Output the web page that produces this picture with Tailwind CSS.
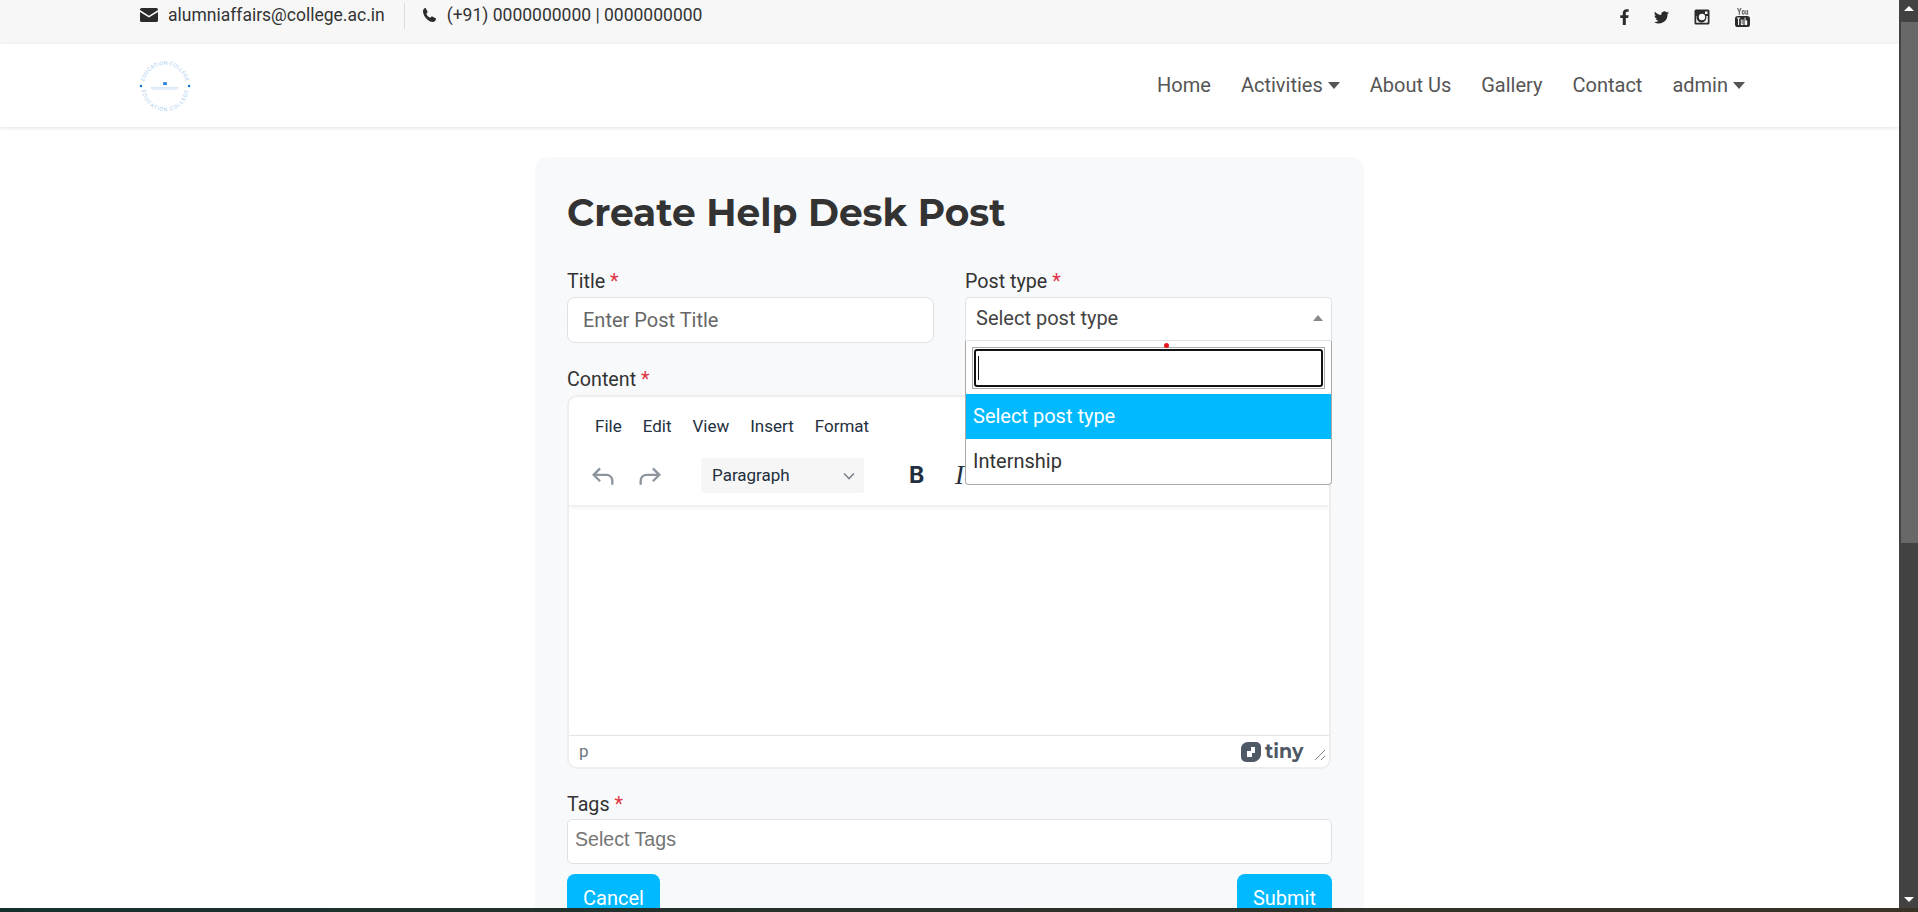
<!DOCTYPE html>
<html>
<head>
<meta charset="utf-8">
<title>Create Help Desk Post</title>
<script src="https://cdn.jsdelivr.net/npm/@tailwindcss/browser@4"></script>
</head>
<body class="m-0 h-[912px] w-[1918px] overflow-hidden bg-white font-['Roboto',sans-serif] text-[#333]">
<div class="flex h-[908px] w-full">
  <div class="flex h-full w-[1899px] flex-col overflow-hidden">
    <div class="flex h-[44px] shrink-0 justify-between bg-[#f7f7f7] pl-[140px] pr-[149px]">
      <div class="flex items-start pt-[3px] text-[17.5px] leading-[24px] text-[#333]">
        <svg class="mr-[10px] mt-[5px] h-[14px] w-[18px]" viewBox="0 0 17 14" preserveAspectRatio="none"><path fill="#2b2b2b" d="M1.5 0h14A1.5 1.5 0 0 1 17 1.5v.6L8.5 7.8 0 2.100v-.6A1.500 1.500 0 0 1 1.500 0zM0 3.900l8.500 5.700L17 3.900v8.600a1.500 1.500 0 0 1-1.500 1.500h-14A1.500 1.500 0 0 1 0 12.500z"/></svg>
        <span>alumniaffairs@college.ac.in</span>
        <div class="ml-[19px] mr-[18px] h-[26px] w-px bg-[#ddd]"></div>
        <svg class="mr-[11px] mt-[5px] h-[14px] w-[13px]" viewBox="0 0 13 14"><path fill="#2b2b2b" d="M2.800.300 4.500 3.700c.2.400.1.800-.2 1.100l-1 1c.7 1.800 2 3.200 3.900 4l1-1c.3-.3.700-.4 1.100-.2l3.400 1.700c.3.200.4.500.3.800-.4 1.700-1.500 2.900-3 2.900C4.900 14 0 8.200 0 3.100 0 1.600.900.700 2 .100c.3-.2.600 0 .8.200z"/></svg>
        <span>(+91) 0000000000 | 0000000000</span>
      </div>
      <div class="flex items-start gap-[25px] pt-[9px]">
        <svg class="h-[16px] w-[9px]" viewBox="0 0 9 16"><path fill="#2b2b2b" d="M2.800 16V9H.3V6.200h2.500V4C2.800 1.500 4.300.2 6.500.2c1 0 1.900.1 2.200.1v2.500H7.200C6 2.800 5.800 3.400 5.800 4.200v2h2.800L8.200 9H5.800v7z"/></svg>
        <svg class="mt-[2px] h-[13px] w-[15px]" viewBox="0 0 16 14" preserveAspectRatio="none"><path fill="#2b2b2b" d="M16 1.900c-.6.300-1.200.4-1.900.5.700-.4 1.200-1 1.400-1.800-.6.400-1.300.6-2.100.8A3.300 3.300 0 0 0 7.800 4.400C5.100 4.300 2.700 3 1.100.9c-.9 1.500-.4 3.400 1 4.400-.5 0-1-.2-1.500-.4 0 1.600 1.100 2.900 2.600 3.200-.5.100-1 .2-1.500.1.400 1.300 1.600 2.200 3.100 2.300A6.600 6.600 0 0 1 0 11.800 9.300 9.300 0 0 0 14.400 3.500c.6-.4 1.200-1 1.600-1.600z"/></svg>
        <svg class="h-[16px] w-[16px]" viewBox="0 0 16 16"><path fill="#2b2b2b" fill-rule="evenodd" d="M2 .5h12A1.500 1.500 0 0 1 15.500 2v12a1.500 1.500 0 0 1-1.500 1.500H2A1.500 1.500 0 0 1 .5 14V2A1.500 1.500 0 0 1 2 .5zM11 2.500v2.500h2.500V2.500zM2.200 7v6.300c0 .3.200.5.500.5h10.600c.3 0 .5-.2.500-.5V7h-1.500a5 5 0 1 1-9.600 0zM8 4.800a3.200 3.200 0 1 0 0 6.400 3.200 3.200 0 0 0 0-6.400z"/></svg>
        <svg class="-mt-px h-[19px] w-[15px]" viewBox="0 0 16 20" preserveAspectRatio="none"><path fill="#666" d="M2 0h1.500l1 3 1-3H7L5.300 4.200V7H4V4.200zM8.800 2c1 0 1.600.6 1.600 1.500v2C10.400 6.400 9.800 7 8.800 7S7.200 6.400 7.200 5.500v-2C7.200 2.600 7.800 2 8.800 2zm0 1c-.3 0-.4.200-.4.500v2c0 .3.100.5.400.5s.4-.2.400-.5v-2c0-.3-.1-.5-.4-.5zM11 2h1.100v3.600c0 .3.100.4.300.4s.4-.2.500-.4V2H14v5h-1.100v-.5c-.3.400-.7.600-1.100.6-.5 0-.8-.4-.8-1z"/><path fill="#2b2b2b" fill-rule="evenodd" d="M3 8.500h10a3 3 0 0 1 3 3V17a3 3 0 0 1-3 3H3a3 3 0 0 1-3-3v-5.500a3 3 0 0 1 3-3zM2 10v1h1.200v7h1.200v-7h1.200v-1zm4.200 2v5c0 .6.300 1 .8 1 .4 0 .7-.2 1-.5v.5h1v-6h-1v4.600c-.2.200-.4.300-.5.300-.2 0-.3-.1-.3-.3V12zm4 -2v8h1v-.4c.3.300.5.500.9.500.5 0 .9-.4.900-1.100v-3c0-.800-.4-1.100-.9-1.100-.3 0-.6.200-.9.500V10z"/></svg>
      </div>
    </div>
    <nav class="relative z-10 flex h-[83px] shrink-0 items-center justify-between bg-white pl-[139px] pr-[154px] shadow-[0_1px_4px_rgba(0,0,0,0.12)]">
      <svg class="h-[52px] w-[52px]" viewBox="0 0 54 54">
        <defs>
          <path id="top-arc" d="M5 27 A22 22 0 0 1 49 27"/>
          <path id="bot-arc" d="M7 29 A20 20 0 0 0 47 29"/>
        </defs>
        <text font-family="Roboto" font-size="5.500" fill="#a9cdef" letter-spacing=".3"><textPath href="#top-arc" startOffset="50%" text-anchor="middle">EDUCATION COLLEGE</textPath></text>
        <text font-family="Roboto" font-size="5.500" fill="#a9cdef" letter-spacing=".3" dominant-baseline="hanging"><textPath href="#bot-arc" startOffset="50%" text-anchor="middle">EDUCATION COLLEGE</textPath></text>
        <circle cx="2" cy="27" r="1.300" fill="#0a74da"/><circle cx="52" cy="27" r="1.300" fill="#0a74da"/>
        <rect x="25" y="23" width="4" height="3" fill="#2a86df"/>
        <rect x="12" y="28.500" width="29" height="1" fill="#bcd6f0"/><rect x="14" y="30.500" width="25" height=".7" fill="#d3e4f5"/>
      </svg>
      <div class="flex items-center gap-[30px] text-[20px] leading-[27px] text-[#555]">
        <span>Home</span>
        <span class="flex items-center">Activities<span class="ml-[5px] h-0 w-0 border-x-[6px] border-t-[7px] border-x-transparent border-t-[#555]"></span></span>
        <span>About Us</span>
        <span>Gallery</span>
        <span>Contact</span>
        <span class="flex items-center">admin<span class="ml-[5px] h-0 w-0 border-x-[6px] border-t-[7px] border-x-transparent border-t-[#555]"></span></span>
      </div>
    </nav>
    <main class="flex justify-center pt-[30px]">
      <div class="h-[900px] w-[829px] shrink-0 rounded-[12px] bg-[#f8f9fa] px-[32px] pt-[33px]">
        <h1 class="m-0 font-['Montserrat','Open_Sans',sans-serif] text-[37.5px] font-bold leading-[45px] text-[#333]">Create Help Desk Post</h1>
        <div class="mt-[33px] grid grid-cols-[367px_367px] gap-x-[31px]">
          <div>
            <label class="block text-[19.7px] leading-[27px] text-[#333]">Title <span class="text-[#dc3545]">*</span></label>
            <div class="mt-[2px] flex h-[46px] items-center rounded-[8px] border border-[#dee2e6] bg-white pl-[15px] text-[20px] text-[#666]">Enter Post Title</div>
          </div>
          <div class="relative">
            <label class="block text-[19.7px] leading-[27px] text-[#333]">Post type <span class="text-[#dc3545]">*</span></label>
            <div class="mt-[2px] flex h-[44px] items-center justify-between rounded-t-[4px] border border-[#dee2e6] bg-white pl-[10px] pr-[8px] text-[20px] text-[#444]">
              <span class="-mt-[2px]">Select post type</span>
              <span class="mb-[3px] h-0 w-0 border-x-[5px] border-b-[6px] border-x-transparent border-b-[#888]"></span>
            </div>
            <div class="absolute left-0 top-[73px] z-20 w-[367px] rounded-b-[4px] border border-t-0 border-[#aaa] bg-white text-[20px]">
              <div class="relative h-[53px] px-[6px] pt-[6px]">
                <span class="absolute left-[198px] top-[2px] h-[5px] w-[5px] rounded-full bg-[#e8141c]"></span>
                <div class="h-[42px] border border-[#aaa] p-px">
                  <div class="flex h-full items-center rounded-[3px] border-2 border-[#111] bg-white pl-[2px]"><span class="h-[24px] w-px bg-[#111]"></span></div>
                </div>
              </div>
              <div class="flex h-[45px] items-center bg-[#00b9ff] pb-[2px] pl-[7px] text-white">Select post type</div>
              <div class="flex h-[45px] items-center pb-[2px] pl-[7px] text-[#333]">Internship</div>
            </div>
          </div>
        </div>
        <label class="mt-[23px] block text-[19.7px] leading-[27px] text-[#333]">Content <span class="text-[#dc3545]">*</span></label>
        <div class="mt-[2px] flex h-[374px] w-[764px] flex-col overflow-hidden rounded-[10px] border-2 border-[#eeeeee] bg-white">
          <div class="relative z-10 h-[108px] shrink-0 shadow-[0_2px_4px_rgba(34,47,62,0.1)]">
            <div class="flex gap-[21px] pl-[26px] pt-[17px] text-[17px] leading-[24px] text-[#222f3e]">
              <span>File</span><span>Edit</span><span>View</span><span>Insert</span><span>Format</span>
            </div>
            <div class="mt-[20px] flex h-[35px] items-center pl-[20px]">
              <svg class="h-[28px] w-[28px]" viewBox="0 0 24 24"><path fill="none" stroke="#8d959e" stroke-width="2" d="M9.500 5.500 4 11l5.500 5.500M4 11h11a5 5 0 0 1 5 5v3.500"/></svg>
              <svg class="ml-[19px] h-[28px] w-[28px]" viewBox="0 0 24 24"><path fill="none" stroke="#8d959e" stroke-width="2" d="M14.500 5.500 20 11l-5.500 5.500M20 11H9a5 5 0 0 0-5 5v3.500"/></svg>
              <div class="ml-[37px] flex h-[35px] w-[163px] items-center justify-between rounded-[3px] bg-[#f6f6f6] pl-[11px] pr-[9px] text-[17px] text-[#222f3e]">
                <span>Paragraph</span>
                <svg class="h-[12px] w-[12px]" viewBox="0 0 12 12"><path fill="none" stroke="#7d858e" stroke-width="1.600" d="M1 3.500l5 5 5-5"/></svg>
              </div>
              <span class="ml-[45px] w-[15px] font-['Inter',sans-serif] text-[23px] font-bold text-[#222f3e]">B</span>
              <span class="ml-[31px] font-['Liberation_Serif',serif] text-[27px] italic text-[#222f3e]">I</span>
            </div>
          </div>
          <div class="flex-1"></div>
          <div class="flex h-[32px] shrink-0 items-center justify-between border-t border-[#e4e4e4] pl-[10px] pr-[3px] text-[17px] text-[#6b7580]">
            <span>p</span>
            <div class="flex items-center">
              <svg class="mr-[4px] h-[20px] w-[20px]" viewBox="0 0 20 20"><path fill="#4f5966" fill-rule="evenodd" d="M7 0h8a5 5 0 0 1 5 5v7c0 4-3 7-7 8H5a5 5 0 0 1-5-5V7c0-4 3-7 7-7zM10 5v4H6v6h5v-4h3V5z"/></svg>
              <span class="w-[36px] font-['Montserrat','Inter',sans-serif] text-[19px] font-bold leading-none text-[#4f5966]">tiny</span>
              <svg class="ml-[13px] mt-[6px] h-[12px] w-[12px]" viewBox="0 0 12 12"><path stroke="#7d858e" stroke-width="1" d="M1 11 11 1M7 11l4-4"/></svg>
            </div>
          </div>
        </div>
        <label class="mt-[22px] block text-[19.7px] leading-[27px] text-[#333]">Tags <span class="text-[#dc3545]">*</span></label>
        <div class="mt-px flex h-[45px] w-[765px] items-start rounded-[5px] border border-[#dee2e6] bg-white pl-[7px] pt-[5px] font-['Liberation_Sans',sans-serif] text-[19.6px] text-[#757575]">Select Tags</div>
        <div class="mt-[10px] flex w-[765px] justify-between">
          <button class="h-[48px] w-[93px] rounded-[8px] bg-[#00b9ff] text-[20px] text-white">Cancel</button>
          <button class="h-[48px] w-[95px] rounded-[8px] bg-[#00b9ff] text-[20px] text-white">Submit</button>
        </div>
      </div>
    </main>
  </div>
  <div class="relative h-full w-[19px] shrink-0 bg-[#424242]">
    <div class="flex h-[17px] items-center justify-center"><span class="h-0 w-0 border-x-[5px] border-b-[5px] border-x-transparent border-b-white"></span></div>
    <div class="ml-[2px] mt-[5px] h-[521px] w-[17px] bg-[#686868]"></div>
    <div class="absolute bottom-0 flex h-[17px] w-full items-center justify-center"><span class="h-0 w-0 border-x-[5px] border-t-[5px] border-x-transparent border-t-white"></span></div>
  </div>
</div>
<div class="h-[4px] w-full bg-gradient-to-r from-[#14302e] to-[#3a3226]"></div>
</body>
</html>
